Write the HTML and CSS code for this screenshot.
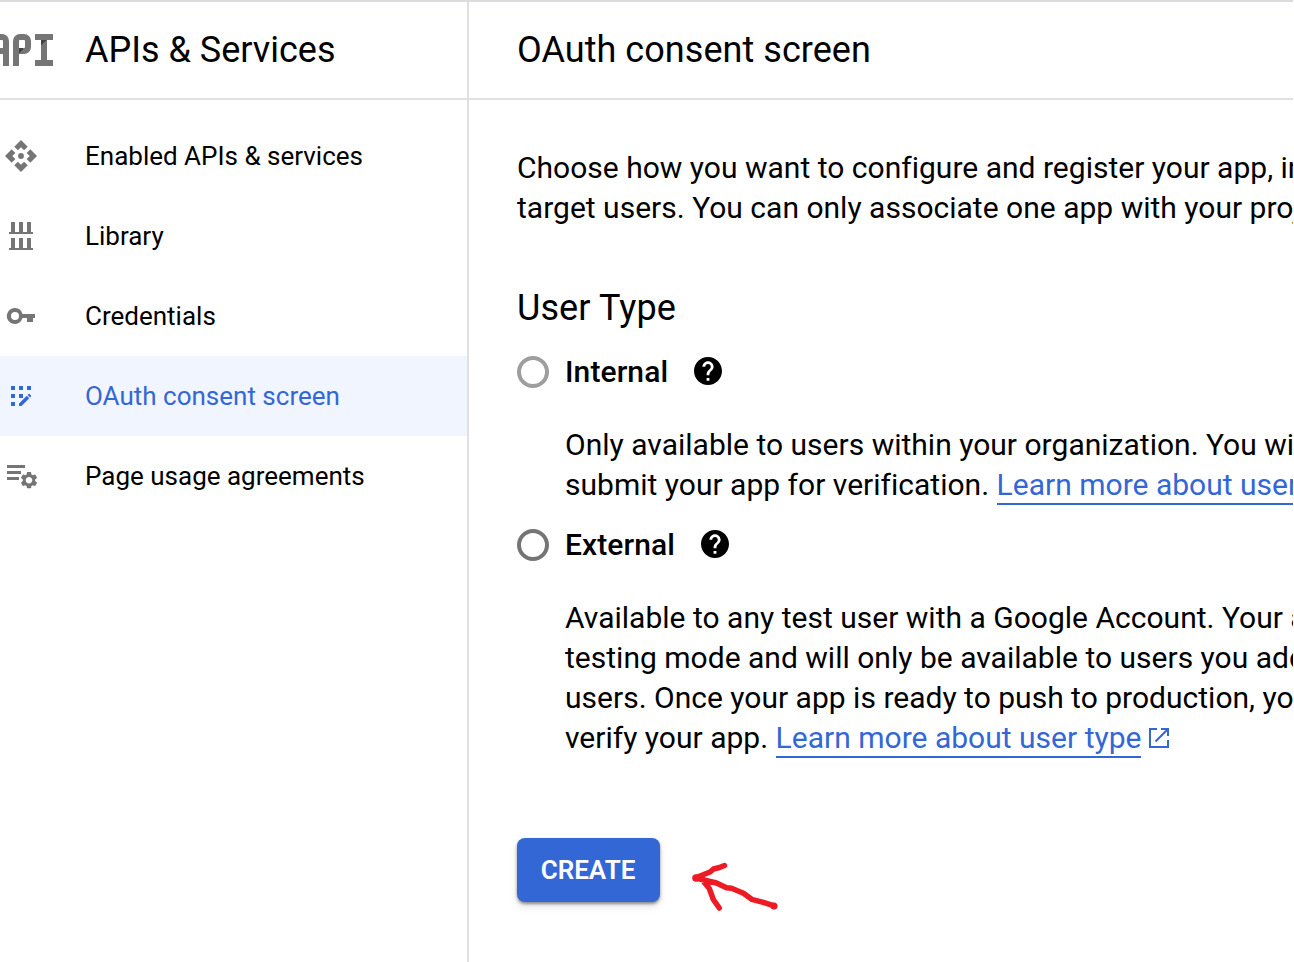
FILE: index.html
```html
<!DOCTYPE html>
<html lang="en">
<head>
<meta charset="utf-8">
<title>OAuth consent screen</title>
<link rel="stylesheet" href="styles.css">
</head>
<body>
<div class="app">
  <aside class="sidebar">
    <header class="bar side-bar">
      <div class="logo" role="img" aria-label="API">
        <span class="logo-a"></span><span class="logo-p"></span><span class="logo-i"></span>
      </div>
      <h2 class="title side-title">APIs &amp; Services</h2>
    </header>
    <nav class="nav">
      <a class="item"><svg class="icon" viewBox="1 1 22 22"><path d="M12 6l2.120 2.120 2.500-2.500L12 1 7.380 5.620l2.500 2.500L12 6zm-6 6l2.120-2.120-2.500-2.500L1 12l4.620 4.620 2.500-2.500L6 12zm12 0l-2.120 2.120 2.500 2.500L23 12l-4.620-4.620-2.500 2.500L18 12zm-6 6l-2.120-2.120-2.500 2.500L12 23l4.620-4.620-2.500-2.500L12 18z"/><circle cx="12" cy="12" r="2"/></svg><span>Enabled APIs &amp; services</span></a>
      <a class="item"><svg class="icon" viewBox="0 0 32 32"><path d="M6 2h4v10h4V2h4v10h4V2h4v10h2v2H4v-2h2zM6 18h4v10h4V18h4v10h4V18h4v10h2v2H4v-2h2z"/></svg><span>Library</span></a>
      <a class="item"><svg class="icon" viewBox="0 0 32 32"><path fill-rule="evenodd" d="M10 8a8 8 0 0 1 7.500 6H30v4h-2v4h-6v-4h-4.500A8 8 0 1 1 10 8zm0 4a4 4 0 1 0 0 8 4 4 0 0 0 0-8z"/></svg><span>Credentials</span></a>
      <a class="item active"><svg class="icon" viewBox="0 0 32 32"><path d="M6 6h4v4H6zM14 6h4v4h-4zM22 6h4v4h-4zM6 14h4v4H6zM14 14h4v4h-4zM6 22h4v4H6zM14 23.500l7.800-7.800 2.500 2.500-7.800 7.800H14zM22.600 14.900l.9-.9q.5-.4 1 0l1.500 1.500q.4.500 0 1l-.9.900z"/></svg><span>OAuth consent screen</span></a>
      <a class="item"><svg class="icon" viewBox="0 0 32 32"><path d="M2 5h18v3H2zM2 11h14v3H2zM2 17h12v3H2z"/><svg x="15.500" y="12" width="17" height="16.500" viewBox="2 2 20 20"><path d="M19.430 12.980c.04-.32.070-.64.070-.98s-.03-.66-.07-.98l2.110-1.650c.19-.15.240-.42.120-.64l-2-3.460c-.12-.22-.39-.3-.61-.22l-2.490 1c-.52-.4-1.080-.73-1.690-.98l-.38-2.650C14.460 2.180 14.250 2 14 2h-4c-.25 0-.46.180-.49.420l-.38 2.650c-.61.250-1.170.590-1.690.98l-2.490-1c-.23-.09-.49 0-.61.220l-2 3.460c-.13.220-.07.490.120.640l2.110 1.650c-.04.320-.07.650-.07.980s.03.660.070.980l-2.110 1.650c-.19.150-.24.420-.12.640l2 3.460c.12.220.390.300.610.220l2.490-1c.52.400 1.080.730 1.690.980l.38 2.650c.03.240.240.420.490.420h4c.25 0 .46-.18.490-.42l.38-2.650c.61-.25 1.170-.59 1.690-.98l2.490 1c.23.090.490 0 .61-.22l2-3.460c.12-.22.070-.49-.12-.64l-2.110-1.650zM12 16c-2.210 0-4-1.790-4-4s1.790-4 4-4 4 1.790 4 4-1.790 4-4 4z"/></svg></svg><span>Page usage agreements</span></a>
    </nav>
  </aside>
  <main class="main">
    <header class="bar main-bar"><h1 class="title">OAuth consent screen</h1></header>
    <section class="content">
      <p class="text">Choose how you want to configure and register your app, in<br>target users. You can only associate one app with your proj</p>
      <h2 class="title user-type">User Type</h2>
      <div class="option"><span class="radio disabled"></span><span class="label">Internal</span><svg class="help" viewBox="2 2 20 20"><path d="M12 2C6.480 2 2 6.480 2 12s4.480 10 10 10 10-4.480 10-10S17.520 2 12 2zm1 17h-2v-2h2v2zm2.070-7.750l-.9.920C13.450 12.900 13 13.500 13 15h-2v-.5c0-1.100.45-2.100 1.170-2.830l1.240-1.260c.37-.36.590-.86.590-1.410 0-1.100-.9-2-2-2s-2 .9-2 2H8c0-2.210 1.790-4 4-4s4 1.790 4 4c0 .88-.36 1.680-.93 2.250z"/></svg></div>
      <p class="text detail">Only available to users within your organization. You wi<br>submit your app for verification. <a class="link">Learn more about user</a></p>
      <div class="option second"><span class="radio"></span><span class="label">External</span><svg class="help" viewBox="2 2 20 20"><path d="M12 2C6.480 2 2 6.480 2 12s4.480 10 10 10 10-4.480 10-10S17.520 2 12 2zm1 17h-2v-2h2v2zm2.070-7.750l-.9.920C13.450 12.900 13 13.500 13 15h-2v-.5c0-1.100.45-2.100 1.170-2.830l1.240-1.260c.37-.36.590-.86.590-1.410 0-1.100-.9-2-2-2s-2 .9-2 2H8c0-2.210 1.790-4 4-4s4 1.790 4 4c0 .88-.36 1.680-.93 2.250z"/></svg></div>
      <p class="text detail">Available to any test user with a Google Account. Your a<br>testing mode and will only be available to users you add<br>users. Once your app is ready to push to production, yo<br>verify your app. <a class="link">Learn more about user type</a><svg class="external" viewBox="0 0 20 20"><path d="M8 1H1v18h18v-7M12 1h7v7M19 1L6.500 13.500"/></svg></p>
      <div class="actions"><button class="create">CREATE</button><svg class="arrow" viewBox="0 0 90 56"><path d="M4.500 20L9 18 19 14l3.500-3 6-1.500L33.500 7.500M4.500 20l21 5 10 4.700 5 .6 12 5 8.200 6 11.600 3 11 3.500M11 21.500l7.300 9 4 11 6 8.500"/><circle cx="5" cy="20" r="1"/><circle cx="83" cy="48" r=".8"/></svg></div>
    </section>
  </main>
</div>
</body>
</html>
```
FILE: styles.css
```css
* { box-sizing: border-box; }
body { margin: 0; background: #fff; color: #000; font-family: Roboto, sans-serif; overflow: hidden; }
.app { display: flex; width: 1293px; height: 962px; overflow: hidden; border-top: 2px solid #dadce0; white-space: nowrap; }
.sidebar { flex: none; width: 469px; border-right: 2px solid #e0e0e0; }
.bar { display: flex; align-items: center; height: 98px; border-bottom: 2px solid #e0e0e0; }
.title { margin: 0; font-size: 36px; line-height: 48px; font-weight: 400; }
.logo { display: flex; flex: none; width: 85px; height: 32px; gap: 4px; overflow: hidden; }
.logo-a { position: relative; flex: none; width: 18px; margin-left: -9px; border: 6px solid #757575; border-bottom: 0; border-radius: 7px 7px 0 0; }
.logo-a::after { content: ""; position: absolute; left: 0; top: 8px; width: 6px; height: 6px; background: #757575; }
.logo-p { position: relative; width: 18px; height: 20px; border: 6px solid #757575; border-radius: 7px 7px 7px 0; }
.logo-p::before { content: ""; position: absolute; left: 0; top: 8px; width: 4px; height: 6px; background: linear-gradient(135deg, #424242 50%, #757575 50%); }
.logo-p::after { content: ""; position: absolute; left: -6px; top: 2px; width: 6px; height: 24px; background: #757575; }
.logo-i { width: 18px; background: linear-gradient(135deg, #424242 50%, transparent 50%) 6px 6px / 6px 5px no-repeat, linear-gradient(#757575, #757575) 6px 0 / 6px 100% no-repeat, linear-gradient(#757575, #757575) 0 0 / 100% 6px no-repeat, linear-gradient(#757575, #757575) 0 100% / 100% 6px no-repeat; }
.nav { padding-top: 16px; }
.item { display: flex; align-items: center; height: 80px; padding-left: 5px; font-size: 26px; color: #000; }
.item.active { background: #f0f5ff; color: #3367d6; }
.icon { flex: none; width: 32px; height: 32px; margin-right: 48px; fill: #757575; }
.active .icon { fill: #3367d6; }
.main { flex: 1; min-width: 0; }
.main-bar { padding-left: 48px; }
.main-bar .title { letter-spacing: .05px; }
.user-type { letter-spacing: .1px; }
.content { padding: 48px 0 0 48px; }
.text { margin: 0; font-size: 30px; line-height: 40px; letter-spacing: .012px; }
.user-type { margin-top: 56px; }
.option { display: flex; align-items: center; height: 32px; margin-top: 24px; }
.radio { width: 32px; height: 32px; margin-right: 16px; border: 4px solid #757575; border-radius: 50%; }
.radio.disabled { border-color: #9e9e9e; }
.label { font-size: 30px; font-weight: 500; line-height: 32px; letter-spacing: .1px; }
.help { width: 28px; height: 28px; margin: -2px 0 0 26px; }
.detail { margin: 37px 0 0 48px; }
.link { padding-bottom: 1px; color: #3367d6; border-bottom: 2px solid #3367d6; }
.external { width: 20px; height: 20px; margin-left: 8px; vertical-align: 0; fill: none; stroke: #3367d6; stroke-width: 2; }
.actions { display: flex; margin-top: 80px; }
.create { width: 143px; height: 64px; padding: 0 1px 0 0; border: 0; border-radius: 8px; background: #3367d6; color: #fff; font: 600 26px Roboto, sans-serif; box-shadow: 0 2px 3px rgba(0,0,0,.4), 0 4px 8px rgba(0,0,0,.12); }
.arrow { width: 90px; height: 56px; margin: 20px 0 0 31px; fill: #ed1c24; stroke: #ed1c24; stroke-width: 5.5; stroke-linecap: round; stroke-linejoin: round; }
.arrow path { fill: none; }
```
